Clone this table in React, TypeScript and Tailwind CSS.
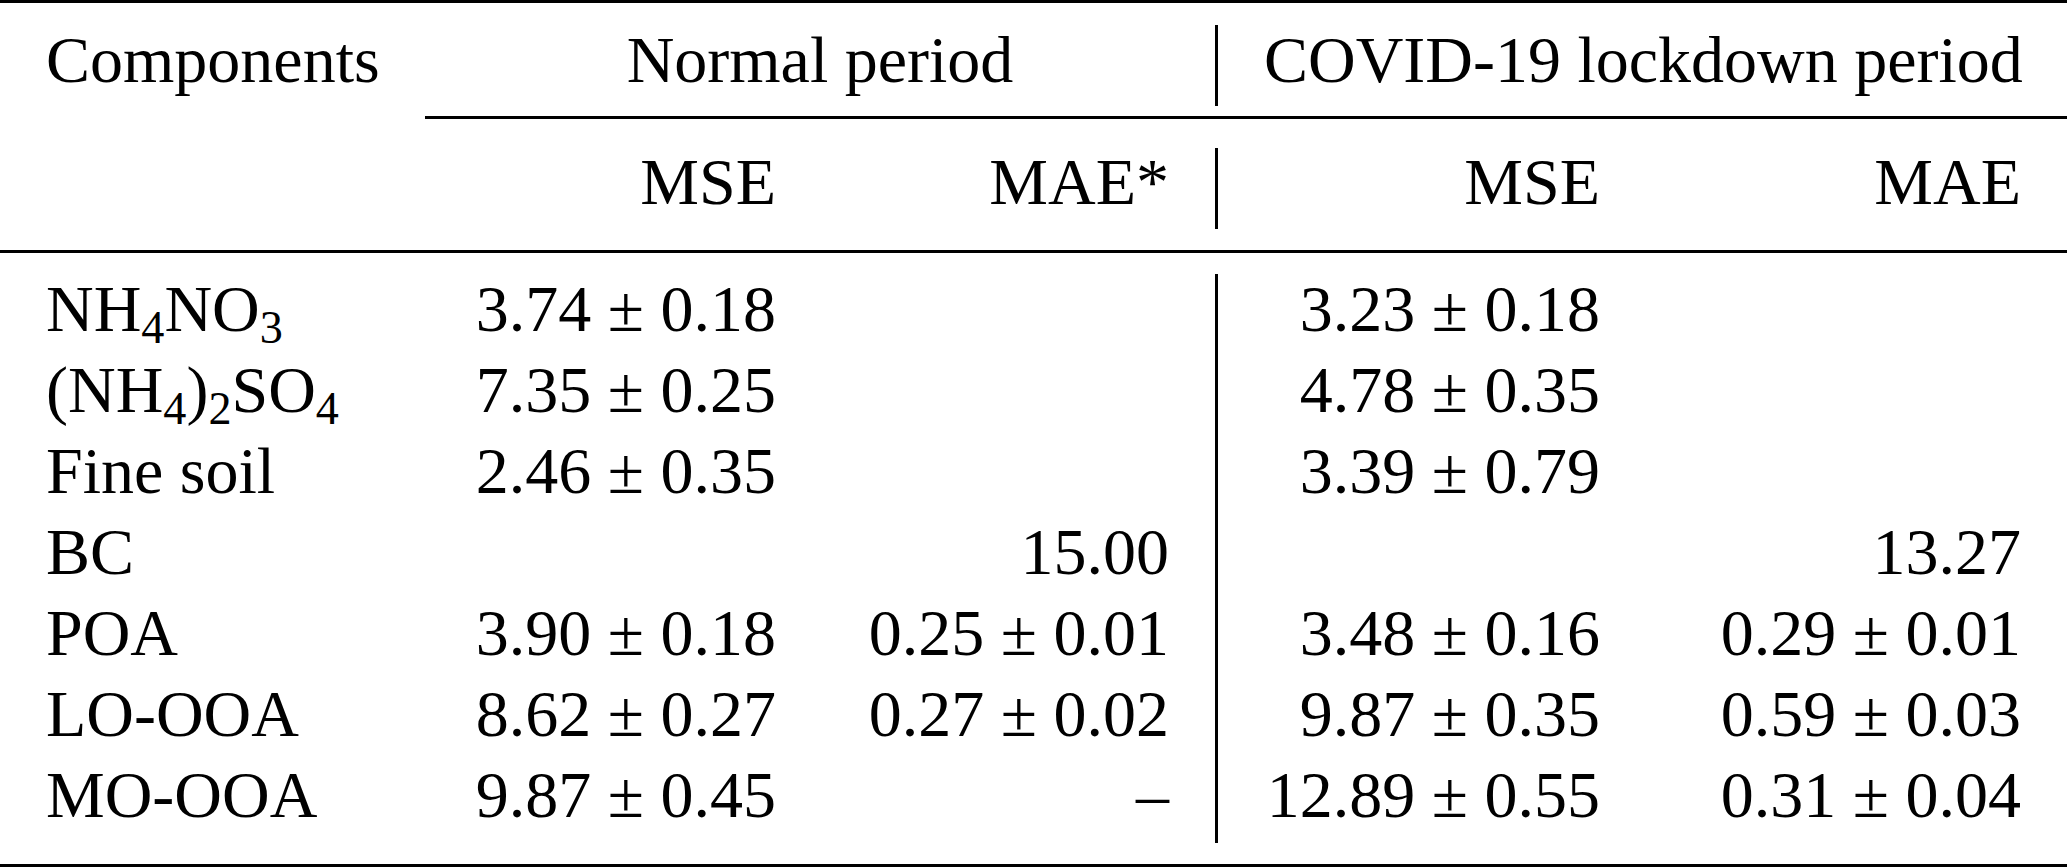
import React from 'react';

const Sub = ({ children }: { children: React.ReactNode }) => (
  <sub className="text-[0.7em]">{children}</sub>
);

type Row = {
  name: React.ReactNode;
  nMse: string;
  nMae: string;
  cMse: string;
  cMae: string;
};

const rows: Row[] = [
  {
    name: (
      <>
        NH<Sub>4</Sub>NO<Sub>3</Sub>
      </>
    ),
    nMse: '3.74 ± 0.18',
    nMae: '',
    cMse: '3.23 ± 0.18',
    cMae: '',
  },
  {
    name: (
      <>
        (NH<Sub>4</Sub>)<Sub>2</Sub>SO<Sub>4</Sub>
      </>
    ),
    nMse: '7.35 ± 0.25',
    nMae: '',
    cMse: '4.78 ± 0.35',
    cMae: '',
  },
  { name: 'Fine soil', nMse: '2.46 ± 0.35', nMae: '', cMse: '3.39 ± 0.79', cMae: '' },
  { name: 'BC', nMse: '', nMae: '15.00', cMse: '', cMae: '13.27' },
  { name: 'POA', nMse: '3.90 ± 0.18', nMae: '0.25 ± 0.01', cMse: '3.48 ± 0.16', cMae: '0.29 ± 0.01' },
  { name: 'LO-OOA', nMse: '8.62 ± 0.27', nMae: '0.27 ± 0.02', cMse: '9.87 ± 0.35', cMae: '0.59 ± 0.03' },
  { name: 'MO-OOA', nMse: '9.87 ± 0.45', nMae: '–', cMse: '12.89 ± 0.55', cMae: '0.31 ± 0.04' },
];

export default function App() {
  return (
    <div className="w-[2067px] h-[868px] bg-white text-black font-['Liberation_Serif','Times_New_Roman',serif] text-[66px] leading-[81px] whitespace-nowrap">
      {/* top rule */}
      <div className="h-[3px] bg-black" />

      {/* header 1 */}
      <div className="flex h-[113px]">
        <div className="w-[425px] pl-[46px] pt-[16px]">Components</div>
        <div className="w-[790px] px-[46px] pt-[16px] text-center">Normal period</div>
        <div className="w-[3px] mt-[22px] h-[81px] bg-black" />
        <div className="w-[849px] px-[46px] pt-[16px] text-center">COVID-19 lockdown period</div>
      </div>

      {/* cmidrule 2-5 */}
      <div className="ml-[425px] h-[3px] bg-black" />

      {/* header 2 */}
      <div className="flex h-[131px]">
        <div className="w-[425px]" />
        <div className="w-[397px] pr-[46px] pt-[22px] text-right">MSE</div>
        <div className="w-[393px] pr-[46px] pt-[22px] text-right">MAE*</div>
        <div className="w-[3px] mt-[29px] h-[81px] bg-black" />
        <div className="w-[428px] pr-[46px] pt-[22px] text-right">MSE</div>
        <div className="w-[421px] pr-[46px] pt-[22px] text-right">MAE</div>
      </div>

      {/* midrule */}
      <div className="h-[3px] bg-black" />

      {/* body */}
      <div className="flex h-[611px]">
        <div className="w-[1215px] pt-[15px]">
          {rows.map((r, i) => (
            <div key={i} className="grid grid-cols-[425px_397px_393px] h-[81px]">
              <div className="pl-[46px]">{r.name}</div>
              <div className="pr-[46px] text-right">{r.nMse}</div>
              <div className="pr-[46px] text-right">{r.nMae}</div>
            </div>
          ))}
        </div>
        <div className="w-[3px] mt-[21px] h-[569px] bg-black" />
        <div className="w-[849px] pt-[15px]">
          {rows.map((r, i) => (
            <div key={i} className="grid grid-cols-[428px_421px] h-[81px]">
              <div className="pr-[46px] text-right">{r.cMse}</div>
              <div className="pr-[46px] text-right">{r.cMae}</div>
            </div>
          ))}
        </div>
      </div>

      {/* bottom rule */}
      <div className="h-[3px] bg-black" />
    </div>
  );
}
